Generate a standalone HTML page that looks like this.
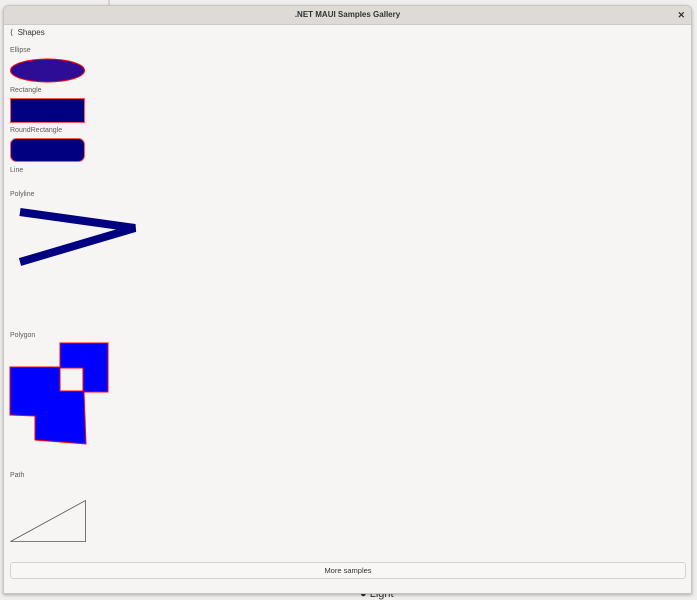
<!DOCTYPE html>
<html><head><style>
html,body{margin:0;padding:0;width:697px;height:599px;overflow:hidden;background:#f0efed;font-family:"Liberation Sans",sans-serif;}
.win{position:absolute;left:3px;top:5px;width:687px;height:587px;background:#f6f5f4;border:1px solid #c9c6c2;border-radius:6px 6px 0 0;box-shadow:0 1px 3px rgba(0,0,0,.3);overflow:hidden;}
.tb{height:18px;background:#dedbd6;border-bottom:1px solid #cdc9c4;text-align:center;font-size:8px;font-weight:bold;line-height:18px;color:#2e3436;position:relative;}
.x{position:absolute;right:6px;top:0;font-size:9px;}
.l{position:absolute;font-size:7px;color:#5e5c5a;}
.btn{position:absolute;left:6px;top:556px;width:674px;height:15px;border:1px solid #d6d3cf;border-radius:3px;background:#f8f7f6;font-size:7.5px;color:#333;text-align:center;line-height:15px;}
</style></head><body>
<div style="position:absolute;left:108px;top:0;width:2px;height:5px;background:#d8d4cc"></div>
<div style="position:absolute;left:360px;top:588px;font-size:11px;color:#333">● Light</div>
<div class="win">
<div class="tb">.NET MAUI Samples Gallery<span class="x">✕</span></div>
<div class="l" style="left:6px;top:22px;font-size:8px;color:#333">⟨ &nbsp;Shapes</div>
<div class="l" style="left:6px;top:41px">Ellipse</div>
<div class="l" style="left:6px;top:81px">Rectangle</div>
<div class="l" style="left:6px;top:121px">RoundRectangle</div>
<div class="l" style="left:6px;top:161px">Line</div>
<div class="l" style="left:6px;top:185px">Polyline</div>
<div class="l" style="left:6px;top:326px">Polygon</div>
<div class="l" style="left:6px;top:466px">Path</div>
<div class="btn">More samples</div>
</div>
<svg style="position:absolute;left:0;top:0" width="697" height="599">
<ellipse cx="47.5" cy="70.5" rx="37" ry="11.5" fill="#2d0d96" stroke="#f00" stroke-width="1"/>
<rect x="10.5" y="98.5" width="74" height="24" fill="#000080" stroke="#f55" stroke-width="1"/>
<rect x="10.5" y="138.5" width="74" height="23" rx="6" fill="#000080" stroke="#f55" stroke-width="1"/>
<polyline points="20,212 135,228 20,262" fill="none" stroke="#000080" stroke-width="8"/>
<path d="M10,367 L60,367 L60,343 L108,343 L108,392 L84,392 L86,444 L35,440 L35,416 L10,415 Z M60,368 L83,368 L83,391 L60,391 Z" fill="#0000ff" fill-rule="evenodd" stroke="#f00" stroke-width="1"/>
<path d="M10.5,541.5 L85.5,500.5 L85.5,541.5 Z" fill="none" stroke="#555" stroke-width="0.8"/>
</svg>
</body></html>
